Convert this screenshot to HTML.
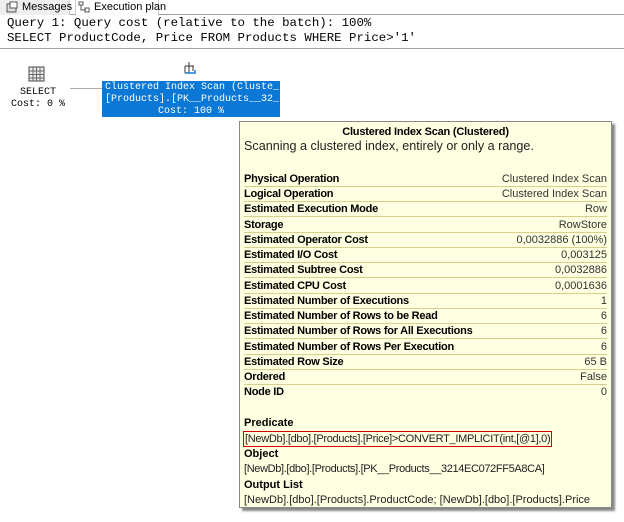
<!DOCTYPE html>
<html><head><meta charset="utf-8">
<style>
*{margin:0;padding:0;box-sizing:border-box}
body{width:624px;height:522px;background:#fff;position:relative;overflow:hidden;font-family:"Liberation Sans",sans-serif}
.tabbar{position:absolute;left:0;top:0;width:624px;height:15px;background:#fff;border-bottom:1px solid #a0a0a0}
.tab{position:absolute;top:0;height:15px;font-size:11px;line-height:14px;color:#000;white-space:nowrap}
.mono{position:absolute;left:7px;font-family:"Liberation Mono",monospace;font-size:12.4px;color:#000;white-space:pre}
.sep{position:absolute;left:0;top:48px;width:624px;height:1px;background:#a0a0a0}
.small{position:absolute;font-family:"Liberation Mono",monospace;font-size:10px;line-height:12px;white-space:pre}
.sel{position:absolute;left:102px;top:81px;width:178px;height:36px;background:#0b78d6;color:#fff}
.tip{position:absolute;left:239px;top:121px;width:373px;height:387px;background:#ffffe1;border:1px solid #888;box-shadow:3px 3px 2px #888;font-size:11px;color:#222}
.row{position:absolute;left:4px;width:363px;height:15px;border-bottom:1px solid #d8d08a;line-height:14px}
.row b{float:left;color:#000;letter-spacing:-0.25px}
.row span{float:right;color:#333}
.t{position:absolute;left:4px;line-height:14px;white-space:nowrap}
</style></head><body>
<div class="tabbar">
 <div class="tab" style="left:0;width:70px;background:#eee;border-right:1px solid #ccc"><svg width="12" height="12" style="position:absolute;left:6px;top:1px"><rect x="1" y="3" width="9" height="8" fill="#ddd" stroke="#555"/><rect x="4" y="1" width="7" height="6" fill="#fff" stroke="#555"/></svg><span style="position:absolute;left:22px;top:0">Messages</span></div>
 <div class="tab" style="left:75px;width:84px;background:#fff;border-left:1px solid #ccc;border-right:1px solid #ccc;height:16px"><svg width="12" height="12" style="position:absolute;left:2px;top:1px"><rect x="1" y="1" width="4" height="3" fill="none" stroke="#555"/><path d="M3 4v5h5" stroke="#555" fill="none"/><rect x="7" y="7" width="4" height="4" fill="none" stroke="#555"/></svg><span style="position:absolute;left:18px;top:0">Execution plan</span></div>
</div>
<div class="mono" style="top:16px">Query 1: Query cost (relative to the batch): 100%</div>
<div class="mono" style="top:31px">SELECT ProductCode, Price FROM Products WHERE Price&gt;'1'</div>
<div class="sep"></div>
<svg style="position:absolute;left:28px;top:66px" width="18" height="17"><rect x="1" y="1" width="15" height="14" fill="#eee" stroke="#444"/><path d="M1 5h15M1 8.5h15M1 12h15M5 1v14M8.5 1v14M12 1v14" stroke="#666" stroke-width="1"/></svg>
<div class="small" style="left:20px;top:87px">SELECT</div>
<div class="small" style="left:11px;top:99px">Cost: 0 %</div>
<div style="position:absolute;left:70px;top:88px;width:32px;height:1px;background:#aaa"></div>
<svg style="position:absolute;left:182px;top:61px" width="16" height="16"><path d="M7 1v4M3 5h9M3 5v7M7 5v7M11 5v5" stroke="#333" fill="none"/><path d="M3 12h10v-3" stroke="#1b78d0" stroke-width="1.5" fill="none"/></svg>
<div class="sel">
 <div class="small" style="left:3px;top:1px">Clustered Index Scan (Cluste_</div>
 <div class="small" style="left:3px;top:13px">[Products].[PK__Products__32_</div>
 <div class="small" style="left:56px;top:25px">Cost: 100 %</div>
</div>
<div class="tip">
 <div class="t" style="top:3px;left:0;width:371px;text-align:center;font-weight:bold;color:#000;letter-spacing:-0.2px">Clustered Index Scan (Clustered)</div>
 <div class="t" style="top:17px;font-size:12.6px">Scanning a clustered index, entirely or only a range.</div>
 <div class="row" style="top:50px"><b>Physical Operation</b><span>Clustered Index Scan</span></div>
 <div class="row" style="top:65px"><b>Logical Operation</b><span>Clustered Index Scan</span></div>
 <div class="row" style="top:80px"><b>Estimated Execution Mode</b><span>Row</span></div>
 <div class="row" style="top:96px"><b>Storage</b><span>RowStore</span></div>
 <div class="row" style="top:111px"><b>Estimated Operator Cost</b><span>0,0032886 (100%)</span></div>
 <div class="row" style="top:126px"><b>Estimated I/O Cost</b><span>0,003125</span></div>
 <div class="row" style="top:141px"><b>Estimated Subtree Cost</b><span>0,0032886</span></div>
 <div class="row" style="top:157px"><b>Estimated CPU Cost</b><span>0,0001636</span></div>
 <div class="row" style="top:172px"><b>Estimated Number of Executions</b><span>1</span></div>
 <div class="row" style="top:187px"><b>Estimated Number of Rows to be Read</b><span>6</span></div>
 <div class="row" style="top:202px"><b>Estimated Number of Rows for All Executions</b><span>6</span></div>
 <div class="row" style="top:218px"><b>Estimated Number of Rows Per Execution</b><span>6</span></div>
 <div class="row" style="top:233px"><b>Estimated Row Size</b><span>65 B</span></div>
 <div class="row" style="top:248px"><b>Ordered</b><span>False</span></div>
 <div class="row" style="top:263px;border-bottom:none"><b>Node ID</b><span>0</span></div>
 <div class="t" style="top:294px;font-weight:bold;color:#000">Predicate</div>
 <div class="t" style="top:309px;left:3px;border:1px solid #d00000;padding:0 1px;letter-spacing:-0.3px">[NewDb].[dbo].[Products].[Price]&gt;CONVERT_IMPLICIT(int,[@1],0)</div>
 <div class="t" style="top:325px;font-weight:bold;color:#000">Object</div>
 <div class="t" style="top:340px;letter-spacing:-0.35px">[NewDb].[dbo].[Products].[PK__Products__3214EC072FF5A8CA]</div>
 <div class="t" style="top:356px;font-weight:bold;color:#000">Output List</div>
 <div class="t" style="top:371px">[NewDb].[dbo].[Products].ProductCode; [NewDb].[dbo].[Products].Price</div>
</div>
</body></html>
